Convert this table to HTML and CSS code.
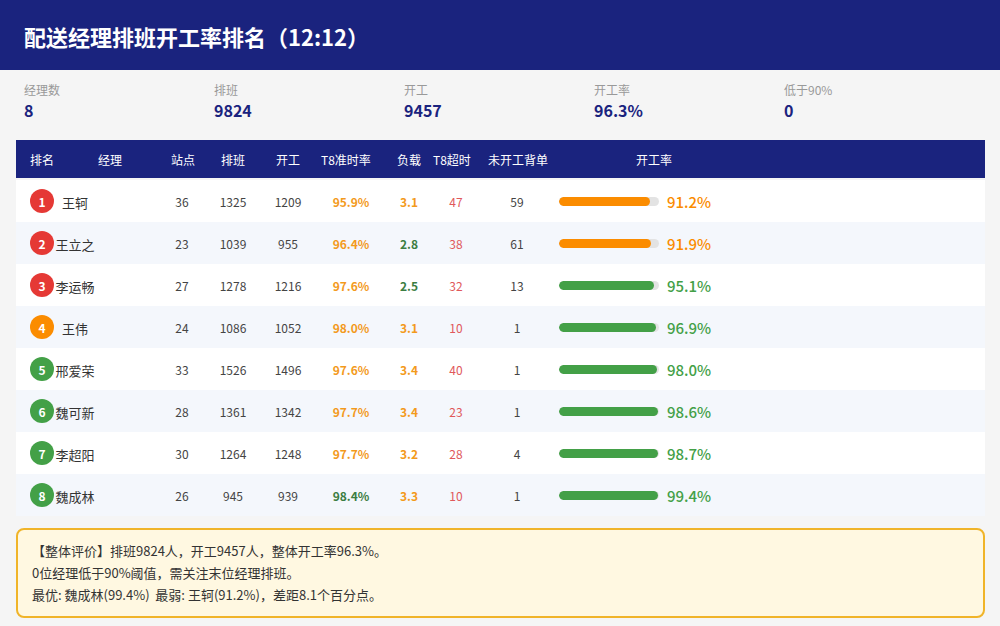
FILE: index.html
```html
<!DOCTYPE html>
<html lang="zh-CN">
<head>
<meta charset="utf-8">
<title>配送经理排班开工率排名</title>
<link rel="stylesheet" href="styles.css">
</head>
<body>
<header class="topbar"><h1>配送经理排班开工率排名（12:12）</h1></header>

<section class="stats">
  <div class="stat"><div class="stat-label">经理数</div><div class="stat-value">8</div></div>
  <div class="stat"><div class="stat-label">排班</div><div class="stat-value">9824</div></div>
  <div class="stat"><div class="stat-label">开工</div><div class="stat-value">9457</div></div>
  <div class="stat"><div class="stat-label">开工率</div><div class="stat-value">96.3%</div></div>
  <div class="stat"><div class="stat-label">低于90%</div><div class="stat-value">0</div></div>
</section>

<div class="table">
  <div class="thead">
    <div class="h h-rank">排名</div>
    <div class="h h-name">经理</div>
    <div class="h h-site">站点</div>
    <div class="h h-sched">排班</div>
    <div class="h h-work">开工</div>
    <div class="h h-t8">T8准时率</div>
    <div class="h h-load">负载</div>
    <div class="h h-over">T8超时</div>
    <div class="h h-back">未开工背单</div>
    <div class="h h-rate">开工率</div>
  </div>
  <div class="tbody">
    <div class="row">
      <span class="badge red">1</span><span class="name">王轲</span>
      <span class="num site">36</span><span class="num sched">1325</span><span class="num work">1209</span>
      <span class="num t8 orange">95.9%</span><span class="num load orange">3.1</span><span class="num over">47</span><span class="num back">59</span>
      <span class="bar"><span class="fill orange-bg" style="width:91.2%"></span></span><span class="pct orange-t">91.2%</span>
    </div>
    <div class="row">
      <span class="badge red">2</span><span class="name">王立之</span>
      <span class="num site">23</span><span class="num sched">1039</span><span class="num work">955</span>
      <span class="num t8 orange">96.4%</span><span class="num load green">2.8</span><span class="num over">38</span><span class="num back">61</span>
      <span class="bar"><span class="fill orange-bg" style="width:91.9%"></span></span><span class="pct orange-t">91.9%</span>
    </div>
    <div class="row">
      <span class="badge red">3</span><span class="name">李运畅</span>
      <span class="num site">27</span><span class="num sched">1278</span><span class="num work">1216</span>
      <span class="num t8 orange">97.6%</span><span class="num load green">2.5</span><span class="num over">32</span><span class="num back">13</span>
      <span class="bar"><span class="fill green-bg" style="width:95.1%"></span></span><span class="pct green-t">95.1%</span>
    </div>
    <div class="row">
      <span class="badge amber">4</span><span class="name">王伟</span>
      <span class="num site">24</span><span class="num sched">1086</span><span class="num work">1052</span>
      <span class="num t8 orange">98.0%</span><span class="num load orange">3.1</span><span class="num over">10</span><span class="num back">1</span>
      <span class="bar"><span class="fill green-bg" style="width:96.9%"></span></span><span class="pct green-t">96.9%</span>
    </div>
    <div class="row">
      <span class="badge grn">5</span><span class="name">邢爱荣</span>
      <span class="num site">33</span><span class="num sched">1526</span><span class="num work">1496</span>
      <span class="num t8 orange">97.6%</span><span class="num load orange">3.4</span><span class="num over">40</span><span class="num back">1</span>
      <span class="bar"><span class="fill green-bg" style="width:98.0%"></span></span><span class="pct green-t">98.0%</span>
    </div>
    <div class="row">
      <span class="badge grn">6</span><span class="name">魏可新</span>
      <span class="num site">28</span><span class="num sched">1361</span><span class="num work">1342</span>
      <span class="num t8 orange">97.7%</span><span class="num load orange">3.4</span><span class="num over">23</span><span class="num back">1</span>
      <span class="bar"><span class="fill green-bg" style="width:98.6%"></span></span><span class="pct green-t">98.6%</span>
    </div>
    <div class="row">
      <span class="badge grn">7</span><span class="name">李超阳</span>
      <span class="num site">30</span><span class="num sched">1264</span><span class="num work">1248</span>
      <span class="num t8 orange">97.7%</span><span class="num load orange">3.2</span><span class="num over">28</span><span class="num back">4</span>
      <span class="bar"><span class="fill green-bg" style="width:98.7%"></span></span><span class="pct green-t">98.7%</span>
    </div>
    <div class="row">
      <span class="badge grn">8</span><span class="name">魏成林</span>
      <span class="num site">26</span><span class="num sched">945</span><span class="num work">939</span>
      <span class="num t8 green">98.4%</span><span class="num load orange">3.3</span><span class="num over">10</span><span class="num back">1</span>
      <span class="bar"><span class="fill green-bg" style="width:99.4%"></span></span><span class="pct green-t">99.4%</span>
    </div>
  </div>
</div>

<div class="summary">
  <p>【整体评价】排班9824人，开工9457人，整体开工率96.3%。</p>
  <p>0位经理低于90%阈值，需关注末位经理排班。</p>
  <p>最优: 魏成林(99.4%)&nbsp; 最弱: 王轲(91.2%)，差距8.1个百分点。</p>
</div>
</body>
</html>
```

FILE: styles.css
```css
* { box-sizing: border-box; }
html, body { margin: 0; padding: 0; }
body {
  width: 1000px;
  height: 626px;
  overflow: hidden;
  background: #f5f5f5;
  font-family: "Noto Sans CJK SC", "Noto Sans", sans-serif;
  color: #333;
}

.topbar {
  height: 70px;
  background: #1a237e;
  display: flex;
  align-items: center;
  padding-left: 24px;
}
.topbar h1 {
  margin: 0;
  color: #fff;
  font-size: 22px;
  font-weight: 700;
  line-height: 1;
  padding-top: 2px;
}

.stats {
  height: 70px;
  display: flex;
  padding: 11px 0 0 24px;
}
.stat { width: 190px; }
.stat-label {
  font-size: 12px;
  line-height: 17px;
  color: #999;
}
.stat-value {
  font-size: 16px;
  line-height: 24px;
  font-weight: 700;
  color: #1a237e;
}

.table { margin: 0 15px 0 16px; }
.thead {
  height: 38px;
  background: #1a237e;
  display: flex;
  align-items: center;
  padding-left: 14px;
  color: #fff;
  font-size: 12px;
}
.h-rank { width: 68px; }
.h-name { width: 73px; }
.h-site { width: 50px; }
.h-sched { width: 55px; }
.h-work { width: 45px; }
.h-t8 { width: 76px; }
.h-load { width: 36px; }
.h-over { width: 55px; }
.h-back { width: 148px; }

.tbody { margin-top: 2px; }
.row {
  height: 42px;
  display: flex;
  align-items: center;
  padding-left: 14px;
  background: #fff;
  font-size: 12px;
  color: #444;
}
.row:nth-child(even) { background: #f4f7fc; }

.badge {
  width: 24px;
  height: 24px;
  border-radius: 50%;
  color: #fff;
  font-weight: 700;
  font-size: 12px;
  display: flex;
  align-items: center;
  justify-content: center;
  flex: none;
}
.badge.red { background: #e53935; }
.badge.amber { background: #fb8c00; }
.badge.grn { background: #43a047; }

.name {
  width: 40px;
  margin-left: 1px;
  padding-top: 3px;
  white-space: nowrap;
  font-size: 13px;
  color: #333;
  display: flex;
  justify-content: center;
}
.num {
  width: 40px;
  text-align: center;
  flex: none;
}
.site { margin-left: 67px; }
.sched { margin-left: 11px; }
.work { margin-left: 15px; }
.t8 { margin-left: 21px; width: 44px; font-weight: 700; }
.load { margin-left: 16px; font-weight: 700; }
.over { margin-left: 7px; color: #e0585b; }
.back { margin-left: 21px; }

.orange { color: #f39a1c; }
.green { color: #3b7d42; }

.bar {
  margin-left: 22px;
  width: 100px;
  height: 9px;
  border-radius: 5px;
  background: #e3e3e3;
  overflow: hidden;
  flex: none;
  display: flex;
}
.fill { height: 100%; border-radius: 5px; }
.orange-bg { background: #fb8c00; }
.green-bg { background: #43a047; }
.pct {
  margin-left: 8px;
  font-size: 15px;
  font-weight: 500;
}
.orange-t { color: #fb8c00; }
.green-t { color: #43a047; }

.summary {
  margin: 12px 15px 0 16px;
  height: 90px;
  border: 2px solid #f0b429;
  border-radius: 8px;
  background: #fff8e1;
  padding: 10px 14px;
  font-size: 13px;
  line-height: 22px;
  color: #333;
}
.summary p { margin: 0; }
```
